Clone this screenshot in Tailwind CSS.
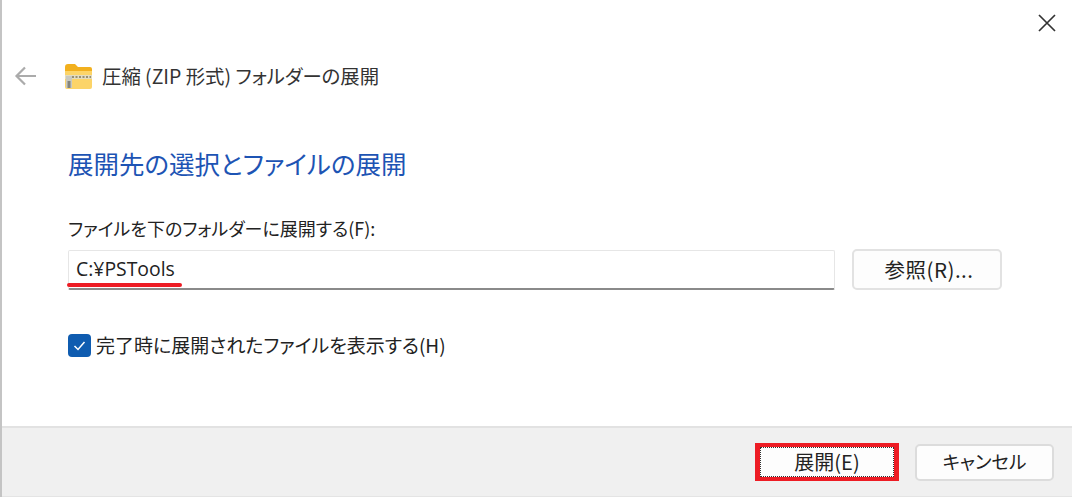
<!DOCTYPE html>
<html lang="ja">
<head>
<meta charset="utf-8">
<script src="https://cdn.jsdelivr.net/npm/@tailwindcss/browser@4"></script>
</head>
<body class="m-0 bg-white">
<div class="w-[1072px] h-[497px] overflow-hidden flex flex-col border-l-2 border-[#c4c4c4] text-[#1a1a1a] [font-feature-settings:'palt'] font-['Noto_Sans_CJK_JP','Noto_Sans',sans-serif]">
  <div class="h-[426px] flex flex-col relative bg-white">
    <svg class="absolute left-[1034px] top-[12px] w-[22px] h-[22px]" viewBox="0 0 22 22" fill="none" stroke="#333" stroke-width="1.7"><path d="M3 3 L19 19 M19 3 L3 19"/></svg>
    <div class="flex items-center h-[24px] mt-[64px] pl-[12px]">
      <svg class="w-[24px] h-[20px]" viewBox="0 0 24 20" fill="none" stroke="#ababab" stroke-width="2.2"><path d="M22 10 H2 M11 1.5 L2.5 10 L11 18.5"/></svg>
      <svg class="w-[29px] h-[27px] ml-[26px]" viewBox="0 0 29 27"><path d="M1 4 Q1 1 4 1 H11 L14 4 H26 Q28 4 28 6 V10 H1 Z" fill="#f2b01e"/><path d="M1 8 H28 V24 Q28 26 26 26 H3 Q1 26 1 24 Z" fill="#fcd468"/><path d="M1 12 H28 V16 H1 Z" fill="#e3dcc0"/><path d="M8 14 H27" stroke="#9a9070" stroke-width="2" stroke-dasharray="2 1.5"/><path d="M2 13 H8 V25 H2 Z" fill="#c9c9c0"/><path d="M3.5 18 H6.5 V25 H3.5 Z" fill="#85857c"/></svg>
      <span class="ml-[9px] text-[19.4px] leading-[24px] text-[#333] whitespace-nowrap">圧縮 (ZIP 形式) フォルダーの展開</span>
    </div>
    <h1 class="ml-[66px] mt-[58px] text-[25.5px] leading-[34px] font-normal text-[#1d54b4] whitespace-nowrap">展開先の選択とファイルの展開</h1>
    <label class="ml-[66px] mt-[36px] text-[18px] leading-[24px] text-[#222] whitespace-nowrap">ファイルを下のフォルダーに展開する(F):</label>
    <div class="flex items-center ml-[66px] mt-[9px] gap-[17px]">
      <div class="relative w-[767px] h-[40px] bg-white border border-[#e6e6e6] border-b-2 border-b-[#8a8a8a] flex items-center pl-[7px] text-[19.4px] text-[#222] font-['Open_Sans',sans-serif] rounded-[2px]">C:¥PSTools
        <div class="absolute left-[-2px] top-[32px] w-[115px] h-[4px] bg-[#ed1c24] rounded-full"></div>
      </div>
      <button class="w-[150px] h-[41px] pl-[4px] bg-[#fdfdfd] border-2 border-[#e2e2e2] rounded-[5px] text-[20.5px] tracking-[0.5px] text-[#222] whitespace-nowrap">参照(R)...</button>
    </div>
    <div class="flex items-center ml-[66px] mt-[43px]">
      <span class="w-[23px] h-[23px] rounded-[4px] bg-[#0f5cb0] flex items-center justify-center">
        <svg class="w-[15px] h-[15px]" viewBox="0 0 15 15" fill="none" stroke="#fff" stroke-width="1.5"><path d="M2.5 8 L6 11.5 L12.5 4"/></svg>
      </span>
      <span class="ml-[5px] text-[19px] leading-[24px] text-[#222] whitespace-nowrap">完了時に展開されたファイルを表示する(H)</span>
    </div>
  </div>
  <div class="flex-1 bg-[#f0f0f0] border-t-2 border-b border-t-[#e2e2e2] border-b-[#e4e4e4] flex items-center justify-end gap-[16px] pr-[18px]">
    <div class="relative w-[144px] h-[38px] border-y-[4px] border-x-[5px] border-[#ed1c24] bg-[#fdfdfd] flex items-center justify-center">
      <div class="absolute inset-0 border border-dotted border-[#333]"></div>
      <span class="text-[20px] text-[#222] whitespace-nowrap">展開(E)</span>
    </div>
    <button class="w-[139px] h-[37px] bg-[#fdfdfd] border-2 border-[#dcdcdc] rounded-[5px] text-[18.5px] text-[#222] whitespace-nowrap">キャンセル</button>
  </div>
</div>
</body>
</html>
